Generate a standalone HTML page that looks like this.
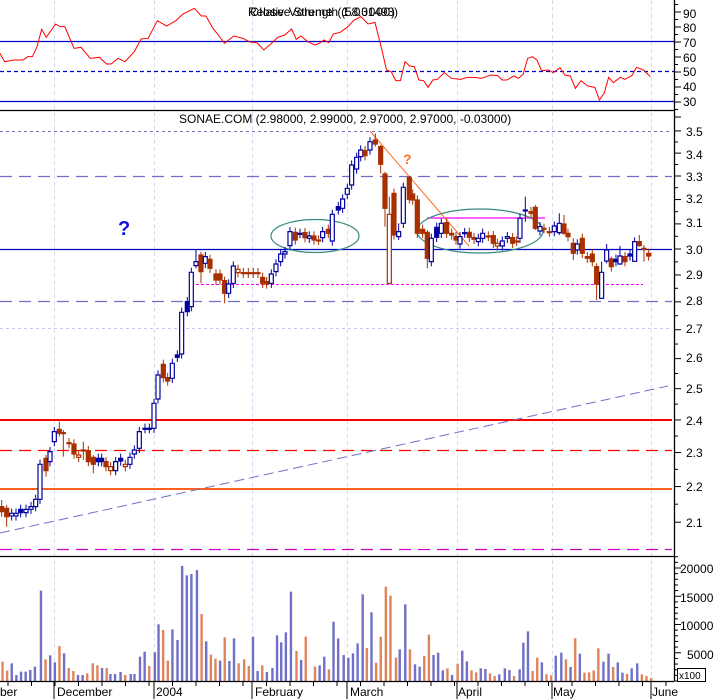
<!DOCTYPE html>
<html><head><meta charset="utf-8"><style>
html,body{margin:0;padding:0;background:#fff;}
svg{display:block;font-family:"Liberation Sans",sans-serif;}
</style></head><body>
<svg id="c" width="723" height="699" viewBox="0 0 723 699" xmlns="http://www.w3.org/2000/svg">
<rect width="723" height="699" fill="#fff"/>
<!-- vertical gridlines -->
<g stroke="#d8d8f4" stroke-dasharray="4,3" stroke-width="1">
<line x1="54.5" y1="0" x2="54.5" y2="681"/><line x1="154.5" y1="0" x2="154.5" y2="681"/>
<line x1="252.5" y1="0" x2="252.5" y2="681"/><line x1="347.5" y1="0" x2="347.5" y2="681"/>
<line x1="457.5" y1="0" x2="457.5" y2="681"/><line x1="552.5" y1="0" x2="552.5" y2="681"/>
<line x1="651.5" y1="0" x2="651.5" y2="681"/>
</g>
<!-- RSI panel -->
<line x1="0" y1="41.5" x2="674" y2="41.5" stroke="#0000c8" stroke-width="1.3"/>
<line x1="0" y1="71.5" x2="674" y2="71.5" stroke="#0000c8" stroke-dasharray="4,3" stroke-width="1.3"/>
<line x1="0" y1="101.5" x2="674" y2="101.5" stroke="#0000c8" stroke-width="1.3"/>
<line x1="0" y1="110.5" x2="674" y2="110.5" stroke="#000" stroke-width="1.3"/>
<g transform="scale(0.4629,0.3333)"><polyline fill="none" stroke="#f00" stroke-width="1" vector-effect="non-scaling-stroke" points="0,160 10,185 30,180 50,180 60,170 70,170 80,140 90,88 100,112 120,72 130,80 140,80 160,145 175,142 195,175 215,172 230,192 240,192 255,175 270,185 290,155 305,117 320,115 340,62 360,78 380,62 395,42 420,25 435,48 445,48 460,85 470,102 485,130 505,108 525,115 540,126 555,128 570,150 585,132 600,112 615,105 630,87 640,118 650,108 665,125 680,135 690,130 700,120 710,128 720,102 735,97 750,82 765,60 780,50 795,72 810,67 825,150 835,210 845,215 855,242 865,242 875,185 885,198 895,200 905,240 915,242 925,262 935,240 945,238 960,218 975,235 995,238 1010,232 1025,232 1040,235 1050,230 1060,225 1075,227 1085,240 1095,240 1110,228 1120,235 1130,223 1140,175 1150,170 1160,180 1170,212 1185,210 1195,218 1210,203 1220,225 1232,228 1243,265 1255,242 1270,258 1285,262 1295,300 1305,280 1315,232 1325,248 1340,232 1350,238 1365,227 1375,202 1390,210 1405,230"/></g>
<text x="248" y="16" font-size="12" fill="#000" textLength="150">Relative Strength (58.31493)</text>
<text x="250" y="16" font-size="12" fill="#000" textLength="145">Close Volume (1.00000)</text>
<!-- main panel lines -->
<text x="179" y="123" font-size="12" fill="#000">SONAE.COM (2.98000, 2.99000, 2.97000, 2.97000, -0.03000)</text>
<line x1="0" y1="131.5" x2="672" y2="131.5" stroke="#7070c0" stroke-dasharray="3,3"/>
<line x1="0" y1="176.5" x2="672" y2="176.5" stroke="#7070c8" stroke-dasharray="12,7" stroke-width="1.2"/>
<line x1="0" y1="249.5" x2="672" y2="249.5" stroke="#0000c0" stroke-width="1.2"/>
<line x1="196" y1="284.5" x2="643" y2="284.5" stroke="#f0f" stroke-dasharray="3,2"/>
<line x1="0" y1="301.5" x2="672" y2="301.5" stroke="#7070c0" stroke-dasharray="12,7" stroke-width="1.2"/>
<line x1="0" y1="328.5" x2="672" y2="328.5" stroke="#c8c8f0" stroke-dasharray="3,3"/>
<line x1="0" y1="420" x2="672" y2="420" stroke="#f00" stroke-width="2"/>
<line x1="0" y1="450.5" x2="672" y2="450.5" stroke="#f00" stroke-dasharray="12,7" stroke-width="1.3"/>
<line x1="0" y1="489" x2="672" y2="489" stroke="#ff6020" stroke-width="2"/>
<line x1="0" y1="549.5" x2="672" y2="549.5" stroke="#d000d0" stroke-dasharray="12,7" stroke-width="1.3"/>
<line x1="0" y1="556.5" x2="674" y2="556.5" stroke="#000" stroke-width="1.3"/>
<line x1="0" y1="533" x2="668" y2="386" stroke="#7070c8" stroke-dasharray="10,5"/>
<line x1="427" y1="218" x2="545" y2="218" stroke="#f0f" stroke-width="1.3"/>
<line x1="370" y1="131" x2="469" y2="246" stroke="#ff6a20" stroke-width="1"/>
<ellipse cx="315" cy="236" rx="44" ry="16.5" fill="none" stroke="#3a8a80" stroke-width="1.2"/>
<ellipse cx="480" cy="231" rx="63" ry="22" fill="none" stroke="#3a8a80" stroke-width="1.2"/>
<text x="118" y="235" font-size="20" font-weight="bold" fill="#1010e0">?</text>
<text x="403" y="164" font-size="14" font-weight="bold" fill="#ff7020">?</text>
<g id="cand"></g>
<g id="vol"></g>
<!-- axis -->
<line x1="674.5" y1="0" x2="674.5" y2="681" stroke="#000" stroke-width="1.3"/>
<line x1="0" y1="681.5" x2="674" y2="681.5" stroke="#000" stroke-width="1.3"/>
<g id="ticks" stroke="#000"></g>
<g font-size="12" fill="#000">
<text x="683" y="18">90</text><text x="683" y="32">80</text><text x="683" y="47">70</text><text x="683" y="62">60</text><text x="683" y="76">50</text><text x="683" y="91">40</text><text x="683" y="106">30</text>
<text x="686" y="136">3.5</text><text x="686" y="159">3.4</text><text x="686" y="181">3.3</text><text x="686" y="203">3.2</text><text x="686" y="227">3.1</text><text x="686" y="254">3.0</text><text x="686" y="279">2.9</text><text x="686" y="305">2.8</text><text x="686" y="333">2.7</text><text x="686" y="362">2.6</text><text x="686" y="393">2.5</text><text x="686" y="425">2.4</text><text x="686" y="457">2.3</text><text x="686" y="491">2.2</text><text x="686" y="527">2.1</text>
<text x="680" y="573">20000</text><text x="680" y="602">15000</text><text x="680" y="630">10000</text><text x="687" y="659">5000</text>
<text x="0" y="696">ber</text><text x="57" y="696">December</text><text x="156" y="696">2004</text><text x="255" y="696">February</text><text x="350" y="696">March</text><text x="458" y="696">April</text><text x="553" y="696">May</text><text x="652" y="696">June</text>
</g>
<rect x="677.5" y="668.5" width="28" height="13" fill="#fff" stroke="#000"/>
<text x="679" y="679" font-size="10">x100</text>
</svg>
<script>
var NS="http://www.w3.org/2000/svg";
function el(p,n,a){var e=document.createElementNS(NS,n);for(var k in a)e.setAttribute(k,a[k]);p.appendChild(e);return e;}
var cg=document.getElementById('cand');
var A=[[5,1220,1235,'o',1200,1250],[20,1225,1250,'o',1215,1280],[35,1240,1248,'b'],[48,1240,1248,'b'],[62,1228,1238,'d'],[78,1228,1238,'b'],[93,1220,1228,'b'],[107,1198,1220,'b'],[120,1093,1198,'b'],[138,1075,1112,'o',1065,1130],[150,1055,1085,'b'],[163,995,1025,'b'],[178,988,1000,'o',965,1010],[190,998,1001,'o',990,1070],[207,1028,1031,'o'],[222,1032,1062,'o'],[236,1065,1072,'h'],[250,1050,1052,'o',1025,1080],[265,1052,1085,'o'],[280,1072,1093,'o',1065,1120],[295,1075,1085,'d'],[305,1075,1085,'d'],[318,1085,1100,'o'],[332,1100,1112,'h'],[347,1085,1112,'b'],[362,1075,1083,'d'],[376,1093,1100,'h'],[390,1072,1093,'b'],[403,1050,1062,'b'],[418,995,1045,'b'],[435,985,986,'b'],[448,985,986,'b'],[462,910,985,'b'],[474,825,897,'b'],[490,793,833,'o'],[503,833,843,'o'],[517,790,835,'b'],[532,765,772,'d'],[545,637,762,'b'],[562,605,635,'d'],[574,517,620,'b'],[588,485,497,'b',450,505],[603,465,515,'o',455,550],[616,470,490,'b'],[630,478,505,'o'],[648,522,540,'o'],[660,522,540,'o'],[674,542,580,'o',530,610],[686,552,580,'b'],[700,498,550,'b'],[714,508,518,'h'],[730,518,520,'o'],[745,518,520,'o'],[760,518,520,'o'],[774,518,520,'o'],[788,532,550,'o'],[800,545,552,'o'],[814,522,550,'b'],[828,492,515,'b'],[842,462,485,'b'],[855,455,462,'b'],[870,395,437,'b'],[886,397,420,'o'],[900,400,401,'b'],[915,398,413,'o'],[928,408,415,'b'],[942,408,420,'o'],[956,420,421,'o'],[968,395,413,'b'],[985,388,400,'o'],[997,343,423,'b'],[1015,320,330,'d'],[1028,297,325,'b'],[1042,265,283,'b'],[1055,195,255,'b'],[1070,172,207,'b']];
var B=[[62,150,170,'b'],[75,152,167,'o'],[90,125,150,'b'],[106,120,132,'o',100,140],[122,140,193,'o',135,220],[135,222,325,'o',215,380],[148,343,550,'h',290,552],[162,280,405,'o'],[176,395,410,'b',370,420],[190,262,370,'b'],[208,232,298,'o',228,310],[218,282,300,'o'],[232,300,400,'o'],[248,388,400,'o'],[262,397,475,'o',390,505],[274,415,485,'b'],[290,382,412,'d'],[304,370,400,'b'],[320,368,400,'o'],[335,400,405,'o'],[348,410,420,'o'],[360,410,432,'b'],[374,398,399,'b'],[388,397,412,'o'],[402,413,418,'o'],[415,415,425,'b'],[428,400,415,'b'],[445,408,409,'o'],[460,407,430,'o'],[472,430,438,'h'],[487,423,438,'b'],[502,410,415,'b'],[518,413,430,'o'],[530,423,424,'o'],[540,355,415,'b'],[556,330,331,'b',290,365],[573,335,340,'o'],[586,322,385,'o',315,390],[600,380,393,'b'],[612,385,386,'o'],[628,395,396,'o'],[643,378,395,'b'],[658,370,398,'b',340,405],[672,372,400,'o',345,405],[684,400,410,'o'],[700,430,460,'o',415,480],[712,432,450,'b'],[727,415,460,'o'],[742,470,475,'o'],[757,462,485,'o'],[770,500,552,'o',490,600],[785,517,595,'b',485,597],[800,450,483,'b',432,490],[814,477,500,'o',470,515],[828,478,485,'d'],[840,468,492,'b',438,494],[855,470,485,'o'],[870,462,468,'d'],[884,425,484,'b',412,486],[898,425,437,'o',405,440],[912,445,446,'o',435,485],[926,460,468,'o']];
function draw(list,tx){var g=el(cg,'g',{transform:'translate('+tx+',100) scale(0.3333)'});
list.forEach(function(c){var x=c[0],t=c[1],b=c[2],ty=c[3],wt=c[4]||t-14,wb=c[5]||b+14;
var col=(ty=='o'||ty=='h')?'#a83000':'#0000a0';
el(g,'line',{x1:x,y1:wt,x2:x,y2:wb,stroke:col,'stroke-width':1,'vector-effect':'non-scaling-stroke'});
var fill=(ty=='o'||ty=='d')?col:'#fff';
el(g,'rect',{x:x-6,y:t,width:12,height:Math.max(b-t,3),fill:fill,stroke:col,'stroke-width':1.2,'vector-effect':'non-scaling-stroke'});});}
draw(A,0);draw(B,340);
var V="o5 365,o15 392,b25 370,b35 405,b45 395,b55 395,b65 390,b75 380,b88 152,o98 358,b108 346,b118 367,o128 318,b138 340,o148 384,o158 393,b168 405,b178 405,o188 400,o200 370,o210 376,b220 384,o230 384,b238 402,b248 402,b260 396,o270 405,b282 402,b290 402,b302 350,b312 335,o322 378,b334 337,b342 253,o352 270,o362 362,b372 268,b383 300,b393 78,b403 106,b413 102,b425 90,o435 222,b445 304,o455 344,o465 356,b475 362,o485 292,b495 363,b505 295,o515 370,o527 358,o537 378,b546 290,b556 393,o566 376,b576 396,b588 384,b598 286,b607 307,b617 277,b628 155,o640 333,b650 360,o660 290,o680 380,b690 376,b700 350,o710 388,b720 245,b730 295,b742 345,b752 353,b762 340,b772 310,b783 163,o792 324,b802 217,o812 368,o822 290,o833 140,o843 167,o855 353,b863 328,b875 193,o885 328,b896 373,b906 380,o916 348,o926 284,b936 345,b946 338,b956 391,o966 385,b976 405,o988 371,b998 332,b1008 364,o1018 391,o1028 397,b1038 385,b1048 387,o1058 400,o1068 408,b1078 403,b1090 385,b1100 390,o1110 408,b1122 388,b1130 308,b1140 274,o1150 393,o1160 353,b1170 367,o1180 403,o1190 406,b1200 347,b1212 338,o1222 358,b1232 381,o1242 295,b1252 341,o1262 398,o1272 397,o1282 391,o1292 325,b1303 365,b1314 341,o1324 381,b1334 367,b1344 398,o1354 402,b1364 385,b1376 370,o1386 403,o1396 408,o1406 414".split(',');
var vg=document.getElementById('vol');
V.forEach(function(s){var c=s[0],p=s.slice(1).split(' '),x=+p[0]/2.16,y=540+(+p[1])/3;
el(vg,'rect',{x:(x-1).toFixed(2),y:y.toFixed(2),width:2.4,height:(681-y).toFixed(2),fill:c=='b'?'#7070c8':'#e0845c'});});
var tg=document.getElementById('ticks');
for(var v=20;v<=100;v+=5){var y=42+(70-v)*1.5;el(tg,'line',{x1:674,y1:y,x2:v%10?678:681,y2:y});}
[3.5,3.4,3.3,3.2,3.1,3.0,2.9,2.8,2.7,2.6,2.5,2.4,2.3,2.2,2.1].forEach(function(p){var y=249-766*Math.log(p/3);el(tg,'line',{x1:674,y1:y,x2:681,y2:y});var y2=249-766*Math.log((p-0.05)/3);if(p>2.1)el(tg,'line',{x1:674,y1:y2,x2:678,y2:y2});});
for(var v=0;v<=22000;v+=1000){var y=681-v*113/20000;el(tg,'line',{x1:674,y1:y,x2:v%5000?678:681,y2:y});}
[54,154,252,347,457,552,651].forEach(function(x){el(tg,'line',{x1:x,y1:681,x2:x,y2:699});});
for(var x=8;x<670;x+=23.5){el(tg,'line',{x1:x,y1:681,x2:x,y2:686});}
</script>
</body></html>
